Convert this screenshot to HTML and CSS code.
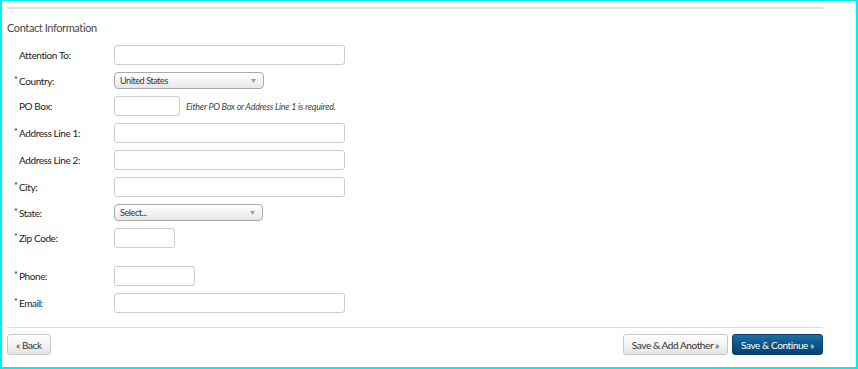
FILE: index.html
```html
<!DOCTYPE html>
<html lang="en">

<head>
    <meta charset="UTF-8">
    <meta name="viewport" content="width=device-width, initial-scale=1.0">
    <title>Contact Information</title>
    <link rel="stylesheet" href="styles.css">
</head>

<body>
    <div class="page">
        <div class="content">
            <div class="rule top"></div>
            <div class="heading">Contact Information</div>
            <form class="form">
                <div class="row">
                    <label class="label">Attention To:</label>
                    <input class="field w-230" type="text" name="attention">
                </div>
                <div class="row">
                    <label class="label"><span class="req">*</span>Country:</label>
                    <div class="select w-150">
                        <span>United States</span>
                        <svg class="arrow" width="5" height="4" viewBox="0 0 5 4"><path d="M0 0h5L2.5 4z" fill="#a0a0a0"/></svg>
                    </div>
                </div>
                <div class="row">
                    <label class="label">PO Box:</label>
                    <input class="field w-66" type="text" name="pobox">
                    <span class="hint">Either PO Box or Address Line 1 is required.</span>
                </div>
                <div class="row">
                    <label class="label"><span class="req">*</span>Address Line 1:</label>
                    <input class="field w-230" type="text" name="address1">
                </div>
                <div class="row">
                    <label class="label">Address Line 2:</label>
                    <input class="field w-230" type="text" name="address2">
                </div>
                <div class="row">
                    <label class="label"><span class="req">*</span>City:</label>
                    <input class="field w-230" type="text" name="city">
                </div>
                <div class="row">
                    <label class="label"><span class="req">*</span>State:</label>
                    <div class="select w-149">
                        <span>Select...</span>
                        <svg class="arrow" width="5" height="4" viewBox="0 0 5 4"><path d="M0 0h5L2.5 4z" fill="#a0a0a0"/></svg>
                    </div>
                </div>
                <div class="row spaced">
                    <label class="label"><span class="req">*</span>Zip Code:</label>
                    <input class="field w-61" type="text" name="zip">
                </div>
                <div class="row">
                    <label class="label"><span class="req">*</span>Phone:</label>
                    <input class="field w-81" type="text" name="phone">
                </div>
                <div class="row">
                    <label class="label"><span class="req">*</span>Email:</label>
                    <input class="field w-230" type="text" name="email">
                </div>
            </form>
            <div class="rule bottom"></div>
            <div class="actions">
                <button class="btn" type="button">&laquo; Back</button>
                <span class="grow"></span>
                <button class="btn" type="button">Save &amp; Add Another &raquo;</button>
                <button class="btn primary" type="button">Save &amp; Continue &raquo;</button>
            </div>
        </div>
    </div>
</body>

</html>
```

FILE: styles.css
```css
body {
    margin: 0;
    padding: 0;
    background: #fff;
    font-family: Lato, "Open Sans", sans-serif;
    color: #333;
    letter-spacing: -0.4px;
}

.page {
    box-sizing: border-box;
    width: 858px;
    height: 369px;
    border: 2px solid #00f0f0;
    border-top-width: 1px;
}

.content {
    width: 816px;
    padding: 6px 0 0 5px;
}

.rule {
    height: 0;
}

.rule.top {
    border-top: 2px solid #e0e0e0;
}

.rule.bottom {
    border-top: 1px solid #dadada;
    margin-top: 14px;
}

.heading {
    font-size: 11px;
    line-height: 14px;
    color: #4a4a4a;
    margin-top: 12px;
    margin-bottom: 10px;
}

.form {
    display: flex;
    flex-direction: column;
    gap: 7px;
    margin: 0;
}

.row {
    display: flex;
    align-items: center;
    min-height: 17px;
}

.row.spaced {
    margin-bottom: 11px;
}

.label {
    box-sizing: border-box;
    width: 107px;
    flex: none;
    padding-left: 12px;
    font-size: 10px;
    color: #222;
    white-space: nowrap;
}

.req {
    display: inline-block;
    width: 5px;
    margin-left: -5px;
    font-size: 9px;
    vertical-align: top;
    line-height: 10px;
}

.field {
    box-sizing: border-box;
    height: 20px;
    margin: 0;
    padding: 0 4px;
    border: 1px solid #ccc;
    border-radius: 3px;
    background: #fff;
    outline: none;
    font-family: inherit;
    font-size: 10px;
}

.select {
    box-sizing: border-box;
    height: 17px;
    display: flex;
    align-items: center;
    justify-content: space-between;
    padding: 0 7px 0 5px;
    border: 1px solid #aaa;
    border-radius: 4px;
    background: linear-gradient(#fff, #f4f4f4 50%, #e6e6e6);
    font-size: 9px;
    color: #333;
}

.arrow {
    display: block;
}

.hint {
    margin-left: 6px;
    font-size: 9px;
    font-style: italic;
    color: #444;
    letter-spacing: -0.25px;
}

.actions {
    display: flex;
    gap: 4px;
    margin-top: 6px;
}

.grow {
    flex: 1;
}

.btn {
    box-sizing: border-box;
    height: 21px;
    padding: 0 8px;
    border: 1px solid #c8c8c8;
    border-radius: 3px;
    background: linear-gradient(#fff, #f3f3f3 50%, #e4e4e4);
    font-family: inherit;
    font-size: 10px;
    letter-spacing: -0.4px;
    color: #333;
    cursor: pointer;
}

.btn.primary {
    border-color: #0a3f63;
    background: linear-gradient(#1d6fa6, #0b5587 50%, #034370);
    color: #fff;
}

.w-230 {
    width: 231px;
}

.w-150 {
    width: 150px;
}

.w-149 {
    width: 149px;
}

.w-66 {
    width: 66px;
}

.w-61 {
    width: 61px;
}

.w-81 {
    width: 81px;
}
```
